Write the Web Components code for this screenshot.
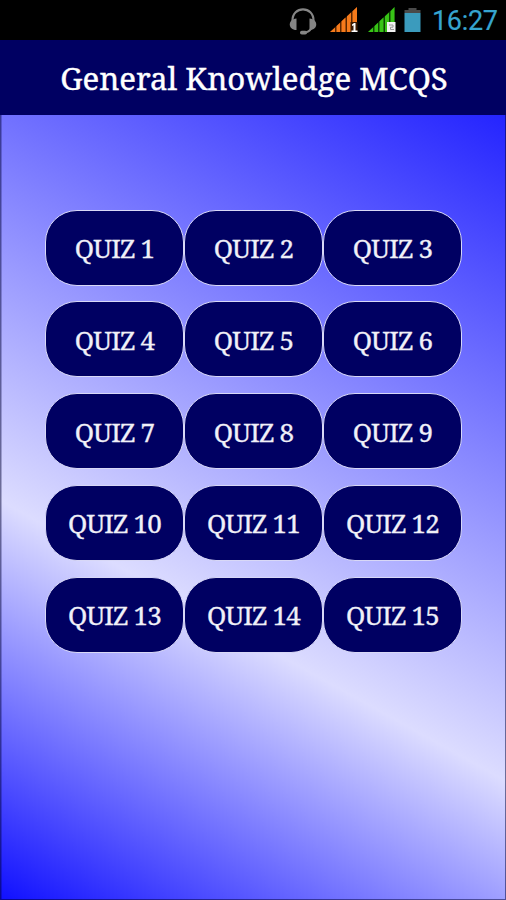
<!DOCTYPE html>
<html lang="en">
<head>
<meta charset="UTF-8">
<title>General Knowledge MCQS</title>
<style>
  body {
    margin: 0;
    background: #000;
  }
</style>
</head>
<body>
<quiz-app></quiz-app>

<script>
class StatusBar extends HTMLElement {
  constructor() {
    super();
    this.attachShadow({ mode: "open" });
  }

  connectedCallback() {
    this.render();
  }

  render() {
    const time = this.getAttribute("time") || "";

    this.shadowRoot.innerHTML = `
      <style>
        :host {
          display: flex;
          justify-content: flex-end;
          align-items: center;
          height: 40px;
          padding-right: 9px;
          box-sizing: border-box;
          background: #000;
          color: #36a5cf;
          font: 27px/40px Roboto, sans-serif;
        }
        svg {
          display: block;
          flex: none;
        }
        .time {
          padding-top: 2px;
          width: 65px;
          letter-spacing: -0.3px;
          white-space: nowrap;
          -webkit-text-stroke: 0.2px;
        }
      </style>
      <svg width="144" height="40" viewBox="0 0 144 40">
        <!-- headset -->
        <g fill="none" stroke="#858585">
          <path d="M4.500 21 C4 5.500 26 5.500 25.500 21" stroke-width="2.200"/>
          <path d="M23.500 28 Q21 32.500 16 32.500" stroke-width="2"/>
        </g>
        <g fill="#858585">
          <path d="M8.500 18.500 L8.500 30 C-0.500 30 -0.500 19 8.500 18.500Z"/>
          <path d="M21.500 18.500 L21.500 30 C30.500 30 30.500 19 21.500 18.500Z"/>
          <rect x="12" y="30.700" width="7" height="3.800" rx="1.800"/>
        </g>
        <!-- signal, sim 1 -->
        <path d="M42 32 L69 7 V32Z" fill="#5a2600"/>
        <path d="M42 32 L47 27.400 V32Z M48.500 32 V26 L52 22.700 V32Z M53.500 32 V21.300 L57.500 17.600 V32Z M59 32 V16.300 L63 12.600 V32Z M64.500 32 V11.200 L69 7 V32Z" fill="#f57a1b"/>
        <rect x="62.500" y="22" width="7" height="10" fill="#3b1a02"/>
        <path d="M64 24.500 L66 23 H67.500 V30.500 H69.500 V32 H63.500 V30.500 H65.500 V25.300 L64 26Z" fill="#fff"/>
        <!-- signal, sim 2 -->
        <path d="M80 32 L106.500 7 V32Z" fill="#0d4303"/>
        <path d="M80 32 L85 27.400 V32Z M86.500 32 V26 L90 22.700 V32Z M91.500 32 V21.300 L95.500 17.600 V32Z M97 32 V16.300 L101 12.600 V32Z M102.500 32 V11.200 L106.500 7 V32Z" fill="#38c316"/>
        <rect x="99" y="22" width="8.500" height="10" fill="#f2f2f2"/>
        <path d="M101 25 H105 V27.200 H102.500 V29.500 H106" fill="none" stroke="#9a9a9a" stroke-width="1"/>
        <!-- battery -->
        <path d="M120.500 8 H128.500 V10 H132.500 V13 H116.500 V10 H120.500Z" fill="#4a4a4a"/>
        <rect x="116.500" y="13" width="16" height="19" fill="#3b9bbd"/>
      </svg>
      <div class="time">${time}</div>
    `;
  }
}

class TitleBar extends HTMLElement {
  constructor() {
    super();
    this.attachShadow({ mode: "open" });
  }

  connectedCallback() {
    this.shadowRoot.innerHTML = `
      <style>
        :host {
          display: flex;
          justify-content: center;
          align-items: center;
          height: 75px;
          padding: 1px 0 0 2px;
          box-sizing: border-box;
          background: #000062;
          color: #fff;
          font-size: 31.200px;
          line-height: 40px;
          white-space: nowrap;
          -webkit-text-stroke: 0.4px;
        }
      </style>
      <slot></slot>
    `;
  }
}

class QuizButton extends HTMLElement {
  constructor() {
    super();
    this.attachShadow({ mode: "open" });
  }

  connectedCallback() {
    this.shadowRoot.innerHTML = `
      <style>
        :host {
          display: block;
        }
        button {
          display: flex;
          justify-content: center;
          align-items: center;
          width: 100%;
          height: 100%;
          margin: 0;
          padding: 1px 0 0 1px;
          border: 1.5px solid #d8d8f6;
          border-radius: 32px;
          background: #000062;
          color: #f0f0f8;
          font: inherit;
          font-size: 26px;
          letter-spacing: -0.800px;
          white-space: nowrap;
          -webkit-text-stroke: 0.3px;
        }
      </style>
      <button><slot></slot></button>
    `;
  }
}

class QuizGrid extends HTMLElement {
  constructor() {
    super();
    this.attachShadow({ mode: "open" });
  }

  connectedCallback() {
    const count = Number(this.getAttribute("count")) || 0;
    let buttons = "";
    for (let i = 1; i <= count; i++) {
      buttons += `<quiz-button>QUIZ ${i}</quiz-button>`;
    }

    this.shadowRoot.innerHTML = `
      <style>
        :host {
          display: grid;
          grid-template-columns: repeat(3, 139px);
          grid-auto-rows: 76.200px;
          row-gap: 15.600px;
          justify-content: center;
        }
      </style>
      ${buttons}
    `;
  }
}

class QuizApp extends HTMLElement {
  constructor() {
    super();
    this.attachShadow({ mode: "open" });
  }

  connectedCallback() {
    this.shadowRoot.innerHTML = `
      <style>
        :host {
          display: flex;
          flex-direction: column;
          width: 506px;
          height: 900px;
          font-family: "Droid Serif", "Noto Serif", "DejaVu Serif Condensed", "DejaVu Serif", serif;
        }
        main {
          flex: 1;
          box-sizing: border-box;
          padding-top: 94.500px;
          border: solid rgba(0, 0, 50, 0.5);
          border-width: 0 1px 1px;
          box-shadow: inset 1px 0 rgba(0, 0, 60, 0.25);
          background: linear-gradient(29deg, #1010ff, #dcdcff 37.500%, #2424ff) border-box;
        }
      </style>
      <status-bar time="16:27"></status-bar>
      <title-bar>General Knowledge MCQS</title-bar>
      <main>
        <quiz-grid count="15"></quiz-grid>
      </main>
    `;
  }
}

customElements.define("status-bar", StatusBar);
customElements.define("title-bar", TitleBar);
customElements.define("quiz-button", QuizButton);
customElements.define("quiz-grid", QuizGrid);
customElements.define("quiz-app", QuizApp);
</script>
</body>
</html>
